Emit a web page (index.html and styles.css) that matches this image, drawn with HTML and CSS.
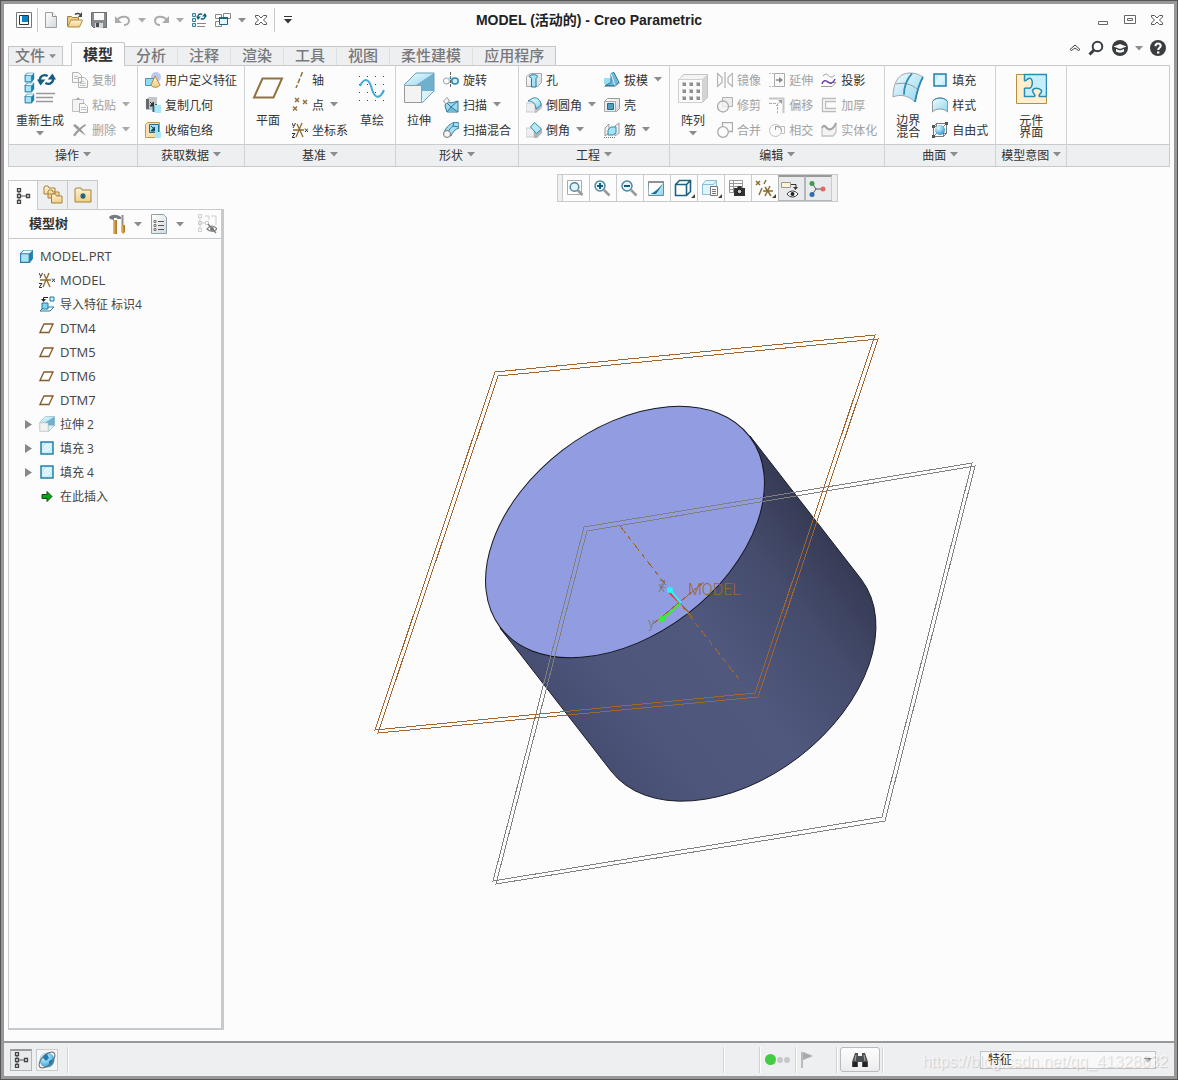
FILE: index.html
```html
<!DOCTYPE html>
<html lang="zh-CN">
<head>
  <meta charset="utf-8"/>
  <meta name="viewport" content="width=device-width, initial-scale=1">
  <title>MODEL (活动的) - Creo Parametric</title>
  <link rel="stylesheet" href="styles.css">
</head>
<body>

<!-- icon sprite -->
<svg class="sprite" aria-hidden="true">
	<defs>
		<linearGradient id="gBlue" x1="0" y1="0" x2="1" y2="1"><stop offset="0" stop-color="#f2fcff"/><stop offset="1" stop-color="#8fd6f0"/></linearGradient>
		<linearGradient id="gGray" x1="0" y1="0" x2="1" y2="1"><stop offset="0" stop-color="#fff"/><stop offset="1" stop-color="#d3d8db"/></linearGradient>
		<linearGradient id="gGold" x1="0" y1="0" x2="0" y2="1"><stop offset="0" stop-color="#fff3d6"/><stop offset="1" stop-color="#f1cd84"/></linearGradient>
		<linearGradient id="gWood" x1="0" y1="0" x2="1" y2="0"><stop offset="0" stop-color="#f0c070"/><stop offset="1" stop-color="#a8701f"/></linearGradient>
		<radialGradient id="gBall" cx=".35" cy=".3" r=".8"><stop offset="0" stop-color="#e4f7fe"/><stop offset=".5" stop-color="#7cc9ea"/><stop offset="1" stop-color="#2a88bb"/></radialGradient>

		<symbol id="caret" viewBox="0 0 8 5"><path d="M0 0h8L4 4.5z" fill="currentColor"/></symbol>
		<symbol id="app" viewBox="0 0 16 16"><path d="M.5.5h15v15H.5z" fill="#fff" stroke="#777"/><path d="M3.5 3.5h9v9h-9z" fill="#fff" stroke="#333"/><path d="M6 4h6v6H6z" fill="#0a84c8"/></symbol>
		<symbol id="new" viewBox="0 0 16 16"><path d="M2.500.5h7l4 4v11h-11z" fill="url(#gGray)" stroke="#9aa0a4"/><path d="M9.500.5v4h4" fill="#fff" stroke="#8b9195"/></symbol>
		<symbol id="open" viewBox="0 0 16 16"><path d="M.500 14V4.500h4l1 1h6V8" fill="#f1cd84" stroke="#a57c34"/><path d="M.8 15l3-7h11.700l-3 7z" fill="url(#gGold)" stroke="#b18b45"/><path d="M8 2.500c2-2 4-1 5.500 0" fill="none" stroke="#444" stroke-width="1.500"/><path d="M15 0v5h-4z" fill="#444"/></symbol>
		<symbol id="save" viewBox="0 0 16 16"><path d="M.5.500h15v15h-13l-2-2z" fill="#888b8e" stroke="#6c6f72"/><path d="M3 1h10v7H3z" fill="#fafafa"/><path d="M4 11h8v5H4z" fill="#d6d9db"/><path d="M5 11h3v4H5z" fill="#4a4d50"/></symbol>
		<symbol id="undo" viewBox="0 0 16 16"><path d="M2 8c4-5 12-4 12 1 0 3-3 4-5 4" fill="none" stroke="#a9abad" stroke-width="2"/><path d="M0 4v7h7z" fill="#a9abad"/></symbol>
		<symbol id="redo" viewBox="0 0 16 16"><path d="M14 8C10 3 2 4 2 9c0 3 3 4 5 4" fill="none" stroke="#a9abad" stroke-width="2"/><path d="M16 4v7H9z" fill="#a9abad"/></symbol>
		<symbol id="arrows" viewBox="0 0 16 12"><path d="M3 9C1 4 5 1 9 3M13 3c2 5-2 8-6 6" fill="none" stroke="#155e82" stroke-width="2"/><path d="M0 6h7L3 11zM16 6H9l4-5z" fill="#155e82"/></symbol>
		<symbol id="regen" viewBox="0 0 16 16"><path d="M1.500 1.500h3v3h-3zM1.500 6.500h3v3h-3zM1.500 11.500h3v3h-3z" fill="#bdeaf8" stroke="#3c7e9b"/><path d="M6 11.500h9M6 14.500h8" stroke="#888"/><use href="#arrows" x="5" y="0" width="11" height="9"/></symbol>
		<symbol id="windows" viewBox="0 0 16 16"><path d="M.5 2.500h6v4h-6zM8.500 1.500h7v5h-7zM.500 9.500h6v5h-6z" fill="#fff" stroke="#888"/><path d="M4.500 5.500h8v7h-8z" fill="#e3f7fd" stroke="#1c6688"/><path d="M4 5h9v2H4z" fill="#1c6688"/></symbol>
		<symbol id="close" viewBox="0 0 12 12"><path d="M.5 1.500h3L6 4l2.500-2.500h3V3L8.500 6l3 3v1.500h-3L6 8l-2.500 2.500h-3V9l3-3-3-3z" fill="#fff" stroke="#555"/></symbol>
		<symbol id="min" viewBox="0 0 12 12"><path d="M1.500 7.500h9v3h-9z" fill="#fff" stroke="#666"/></symbol>
		<symbol id="max" viewBox="0 0 12 12"><path d="M.5 1.500h11v8H.500zM3.500 4.500h5v2h-5z" fill="#fff" stroke="#666"/></symbol>
		<symbol id="up" viewBox="0 0 12 12"><path d="M1 7.500L6 3l5 4.500-1.500 1L6 6l-3.500 2.500z" fill="#fff" stroke="#444"/></symbol>
		<symbol id="search" viewBox="0 0 16 16"><circle cx="9.500" cy="6.500" r="4.800" fill="#fff" stroke="#3a3d40" stroke-width="2"/><path d="M1.500 14.500l4.500-4.500" stroke="#3a3d40" stroke-width="3"/></symbol>
		<symbol id="learn" viewBox="0 0 16 16"><circle cx="8" cy="8" r="8" fill="#3a3d40"/><path d="M1.500 6.500L8 4l6.500 2.500L8 9zM4 9v2.500c2 1.500 6 1.500 8 0V9l-4 1.500z" fill="#fff"/></symbol>
		<symbol id="help" viewBox="0 0 16 16"><circle cx="8" cy="8" r="8" fill="#3a3d40"/><path d="M5.500 6.200c0-3.600 5.200-3.400 5.200-.4C10.700 7.800 8.200 7.800 8.200 10" fill="none" stroke="#fff" stroke-width="2"/><path d="M7 11.500h2.400v2H7z" fill="#fff"/></symbol>

		<symbol id="cube" viewBox="0 0 14 14"><path d="M1 4l3-3h9v8l-3 4H1z" fill="#1f81a8"/><path d="M1.500 4.500h8v8h-8z" fill="#a6e4f8" stroke="#2d7c9f"/><path d="M2 4l2.500-2.500h8L10 4z" fill="#e4f8fe"/></symbol>
		<symbol id="regenBig" viewBox="0 0 32 32"><use href="#cube" x="0" y="0" width="11" height="11"/><use href="#cube" x="0" y="10" width="11" height="11"/><use href="#cube" x="0" y="21" width="11" height="11"/><use href="#arrows" x="13" y="0" width="19" height="15"/><path d="M12 21.500h19M12 25.500h17M12 29.500h17" stroke="#999" stroke-width="1.500"/></symbol>
		<symbol id="copy" viewBox="0 0 16 16"><path d="M.500.500h6l3 3v7h-9zM6.500 5.500h6l3 3v7h-9z" fill="#f6f6f6" stroke="#b3b3b3"/><path d="M2 4.500h4M2 6.500h4M8 9.500h4M8 11.500h5.500M8 13.500h5.500" stroke="#c3c3c3"/></symbol>
		<symbol id="paste" viewBox="0 0 16 16"><path d="M.500 2.500h11v12H.500z" fill="#f4f4f4" stroke="#c0c0c0"/><path d="M4 3V1.500h1L6 0l1 1.500h1V3z" fill="#aaa"/><path d="M7.500 6.500h5l3 3v6h-8z" fill="#fafafa" stroke="#b0b0b0"/><path d="M9 10.500h5M9 12.500h5" stroke="#c3c3c3"/></symbol>
		<symbol id="del" viewBox="0 0 16 16"><path d="M1 3.500l2-1.500c3 2 8 7 11 12-4-3-9-6-13-10.500zM13 2l1 1.500C10 6 5 11 3 14.500L1 13C4 9 8 5 13 2z" fill="#9b9b9b"/></symbol>
		<symbol id="udf" viewBox="0 0 16 16"><circle cx="11" cy="5" r="5" fill="#bfc8f0"/><path d="M.500 6.500h9v7h-9z" fill="#8edcf5" stroke="#4798b7"/><path d="M10 4l5 9c-1 3-8 3-9 0z" fill="url(#gGold)" stroke="#b9893b"/></symbol>
		<symbol id="copygeo" viewBox="0 0 16 16"><path d="M1 2l3-2h8v9H8v4H1z" fill="#c4c7c9"/><path d="M1 2h3v10H1z" fill="#626a70"/><path d="M5 5l3 3M8.500 5v4H5z" stroke="#333" fill="#333"/><path d="M8.500 9V15M11 7v7" stroke="#126d93" stroke-width="2"/><path d="M10 8h6v8h-6z" fill="#a9e8fb"/></symbol>
		<symbol id="shrink" viewBox="0 0 16 16"><path d="M.500 2.500l2-2h12v10l-4 5H.500z" fill="#f8dfae" stroke="#c39a4b"/><path d="M4.500 2.500h9v8h-9z" fill="#9ddff5" stroke="#21708f"/><path d="M6 4l3 3M9.500 5v4H6z" stroke="#17495e" fill="#17495e"/><path d="M10 10h6v6h-6z" fill="#a9e8fb"/></symbol>
		<symbol id="plane" viewBox="0 0 32 32"><path d="M10.500 6.500h19.500l-8.500 19H2z" fill="none" stroke="#8f7440" stroke-width="2"/></symbol>
		<symbol id="planeS" viewBox="0 0 16 16"><path d="M5 4h9l-4 8.500H1z" fill="#fff" stroke="#7d5c27" stroke-width="1.300"/></symbol>
		<symbol id="axis" viewBox="0 0 16 16"><path d="M10.500 0L4 16" stroke="#8f7440" stroke-width="1.500" stroke-dasharray="5 2"/></symbol>
		<symbol id="points" viewBox="0 0 16 16"><path d="M3 1l4 4m0-4l-4 4M11 3l4 4m0-4l-4 4M1 9.500l4 4m0-4l-4 4" stroke="#8f7440" stroke-width="1.500"/></symbol>
		<symbol id="csys" viewBox="0 0 16 16"><path d="M1 8h11M5 2l6 13M10 1L4 15" stroke="#8f6a2d" stroke-width="1.300"/><path d="M0 1l1.500 3M3.500 1L1 6M0 11.500h3l-3 4h3M13 6.500l3 3.500m0-3.500L13 10" stroke="#333" fill="none"/></symbol>
		<symbol id="sketch" viewBox="0 0 32 32"><path d="M3 4.500h26M3 12.500h26M3 20.500h26M3 28.500h26" stroke="#444" stroke-dasharray="1 7"/><path d="M4 14C8 6 12 6 15 14c3 12 8 15 13 4" fill="none" stroke="#43a9d8" stroke-width="2"/></symbol>
		<symbol id="extrude" viewBox="0 0 32 32"><path d="M1 13L13 1h18L18 13z" fill="url(#gBlue)"/><path d="M18 13L31 1v18L18 31z" fill="#d6f2fb"/><path d="M13 13L31 1v18H18z" fill="#6fb1cd"/><path d="M1.500 13.500h17v17h-17z" fill="#f3f3f3" stroke="#999"/><path d="M1 13L13 1h18v18L19 31" fill="none" stroke="#6a9fb5"/></symbol>
		<symbol id="revolve" viewBox="0 0 16 16"><ellipse cx="3.500" cy="9" rx="3" ry="3" fill="#fff" stroke="#999"/><path d="M3 6c3-1 6-1 9 0v5H8z" fill="#9cdcf2"/><ellipse cx="12" cy="9" rx="3.200" ry="3" fill="#cdeffc" stroke="#2f89ae" stroke-width="1.500"/><path d="M7.500 0v16" stroke="#666" stroke-dasharray="3 1"/></symbol>
		<symbol id="sweep" viewBox="0 0 16 16"><path d="M3 4l5 2 7-2v11H4L2 9z" fill="#9cd9ef" stroke="#2e7c9d"/><path d="M4 15l4-5 7 5M8 10l7-6M8 10L3 5" stroke="#2e7c9d" fill="#6fb9d6"/><path d="M.500 4L4 .500 6.500 4 3 7z" fill="#f5f5f5" stroke="#999"/></symbol>
		<symbol id="blend" viewBox="0 0 16 16"><path d="M1 11C3 4 8 2 11 0l5 1v5C12 7 9 11 8 14z" fill="#a7def2" stroke="#2e7c9d"/><path d="M11 0l-1 4 6 1M10 4c-3 2-4 4-5 6" fill="none" stroke="#2e7c9d"/><circle cx="4" cy="12" r="3.500" fill="#f5f5f5" stroke="#777"/></symbol>
		<symbol id="hole" viewBox="0 0 16 16"><path d="M.500 4.500l4-3h11v9l-4 4H.500z" fill="url(#gGray)" stroke="#a4a8aa"/><path d="M3 4.500C5 2 10 2 12 4.500c-1 1-2 1-2 2V15H5.500V6.500C5.500 5 3 5.500 3 4.500z" fill="#a5e3f7" stroke="#20789d"/></symbol>
		<symbol id="round" viewBox="0 0 16 16"><path d="M0 6h9v9H0z" fill="#eceeef" stroke="#ccc"/><path d="M9 9l7-3v5l-6 5H9z" fill="#bbbec0"/><path d="M2 4l5-3c5-1 8 3 8 7l-5 4c0-5-3-8-8-8z" fill="url(#gBlue)" stroke="#2f89ae"/></symbol>
		<symbol id="chamfer" viewBox="0 0 16 16"><path d="M0 6h8v9H0z" fill="#eceeef" stroke="#ccc"/><path d="M10 11l6-4v4l-5 5H8V9z" fill="#b0b4b6"/><path d="M4.500 5l4-4.500L15.500 7l-5 4.500z" fill="#b5e9f9" stroke="#2f89ae"/></symbol>
		<symbol id="draft" viewBox="0 0 16 16"><path d="M0 6h8v6H0z" fill="#9adcf3"/><path d="M7 1.500l3-1 5 10-4 3H1l6-3z" fill="#71b9d6" stroke="#2a7ea2"/><path d="M7 1.500l4 12" stroke="#d9f5fd"/><path d="M0 14.500h11l5-4" fill="none" stroke="#aaa"/></symbol>
		<symbol id="shell" viewBox="0 0 16 16"><path d="M.500 4.500l3-3h12v10l-3 3H.500z" fill="url(#gGray)" stroke="#999"/><path d="M.500 4.500h11v10H.500z" fill="#ececec" stroke="#aaa"/><path d="M3.500 6.500h6v6h-6z" fill="#4e9fc2" stroke="#266d8b"/></symbol>
		<symbol id="rib" viewBox="0 0 16 16"><path d="M1 6l4-4v9l-4 3z" fill="#f2f2f2" stroke="#999"/><path d="M11 4l4-3v10l-4 3z" fill="#f2f2f2" stroke="#999"/><path d="M4 8l3-3h5v6l-3 2H4z" fill="#a5e3f7" stroke="#2f89ae"/><path d="M0 15.500h12" stroke="#777" stroke-dasharray="1 1"/></symbol>
		<symbol id="pattern" viewBox="0 0 32 32"><path d="M1.500 7.500l5-5h24v23l-5 5h-24z" fill="#d2d4d5" stroke="#c2c4c5"/><path d="M1.500 7.500h24v23h-24z" fill="#fafafa" stroke="#d0d0d0"/><path d="M2 7l5-4h23l-5 4z" fill="#f4f4f4"/><path d="M5 10h4v4H5zM12 10h4v4h-4zM19 10h4v4h-4zM5 17h4v4H5zM12 17h4v4h-4zM19 17h4v4h-4zM5 24h4v4H5zM12 24h4v4h-4zM19 24h4v4h-4z" fill="#c4c6c8"/><path d="M6 11h3v3H6zM13 11h3v3h-3zM20 11h3v3h-3zM6 18h3v3H6zM13 18h3v3h-3zM20 18h3v3h-3zM6 25h3v3H6zM13 25h3v3h-3zM20 25h3v3h-3z" fill="#8c8e90"/></symbol>
		<symbol id="mirror" viewBox="0 0 16 16"><path d="M.500 1.500l4.500 4v5l-4.500 4zM15.500 1.500l-4.500 4v5l4.500 4zM8 0v16" stroke="#b5b5b5" fill="none" stroke-width="1.300"/></symbol>
		<symbol id="trim" viewBox="0 0 16 16"><path d="M5.500.500h10v9h-10z" fill="#ededed" stroke="#b0b0b0"/><circle cx="6" cy="9.500" r="5.500" fill="#f3f3f3" fill-opacity=".8" stroke="#ababab" stroke-width="1.300"/></symbol>
		<symbol id="merge" viewBox="0 0 16 16"><path d="M5.500 5V.500h10v9h-4" fill="none" stroke="#aaa" stroke-width="1.300"/><circle cx="6" cy="10" r="5.300" fill="none" stroke="#aaa" stroke-width="1.300"/></symbol>
		<symbol id="extend" viewBox="0 0 16 16"><path d="M0 1.500h5M0 14.500h5" stroke="#bbb" stroke-dasharray="2 1"/><path d="M5.500 1.500h10v13h-10z" fill="#fafafa" stroke="#aaa"/><path d="M7 8h4" stroke="#888" stroke-width="1.500"/><path d="M10 5l4 3-4 3z" fill="#888"/></symbol>
		<symbol id="offset" viewBox="0 0 16 16"><path d="M0 1.500h14.500V16" stroke="#c5c5c5" stroke-width="2" fill="none"/><path d="M0 6.500h8.500V16M7 9l5-5" stroke="#aaa" stroke-dasharray="3 1" fill="none"/><path d="M13 3v4L9 3z" fill="#999"/></symbol>
		<symbol id="intersect" viewBox="0 0 16 16"><path d="M6 4.500h9.500v7H12" fill="none" stroke="#c0c0c0"/><circle cx="6.500" cy="8.500" r="6" fill="none" stroke="#c0c0c0"/><path d="M6.500 8V4.500c4 0 6 2 6 5" fill="none" stroke="#999"/></symbol>
		<symbol id="project" viewBox="0 0 16 16"><path d="M2 4c3-3 4-2 6 0s4 1 6-1M0 14.500h11l4-4H6" stroke="#999" fill="none"/><path d="M1 12c1-4 4-4 6-2s5 2 7-3" stroke="#6b3fa5" stroke-width="1.500" fill="none"/></symbol>
		<symbol id="thicken" viewBox="0 0 16 16"><path d="M15 1.500H1.500v13H15M15 4.500H4.500v7H15" stroke="#bbb" fill="none" stroke-width="1.300"/></symbol>
		<symbol id="solidify" viewBox="0 0 16 16"><path d="M1 14V6c2-5 4 0 6 1s6 0 8-6v9l-3 4z" fill="#f3f3f3" stroke="#c4c4c4" stroke-width="1.300"/><path d="M1 6c2-5 4 0 6 1s6 0 8-6" stroke="#a5a5a5" stroke-width="2" fill="none"/></symbol>
		<symbol id="boundary" viewBox="0 0 32 32"><path d="M1 25C1 12 6 4 12 2c7-2 13-1 19 3-4 7-6 14-8 25C16 23 8 22 1 25z" fill="url(#gBlue)" stroke="#a3a6a8"/><path d="M4 12c8-2 16 0 22 6" stroke="#999" fill="none"/><path d="M20 1.500C15 7 12 14 12 22.500M31 5c-4 7-6 14-8 25" stroke="#2f89b0" stroke-width="1.800" fill="none"/></symbol>
		<symbol id="fill" viewBox="0 0 16 16"><path d="M2 2h12v12H2z" fill="#c9effc" stroke="#277fa5" stroke-width="1.500"/><path d="M4 9l5-5M4 12l8-8M7 12l5-5" stroke="#fff"/></symbol>
		<symbol id="style" viewBox="0 0 16 16"><path d="M.500 4C4 0 12 0 15.500 4v11c-3-4-12-4-15 0z" fill="url(#gBlue)" stroke="#929799"/><path d="M1 4C4 0 12 0 15 4" fill="none" stroke="#2f89ae"/></symbol>
		<symbol id="freestyle" viewBox="0 0 16 16"><path d="M1.500 4.500h10v10h-10zM4.500 1.500h10v10h-10zM1.500 4.500l3-3M11.500 4.500l3-3M1.500 14.500l3-3M11.500 14.500l3-3" stroke="#777" fill="none"/><circle cx="8" cy="8" r="5" fill="url(#gBall)"/><path d="M0 3h3v3H0zM13 0h3v3h-3zM0 13h3v3H0z" fill="#555"/></symbol>
		<symbol id="component" viewBox="0 0 32 32"><path d="M1.500 2.500h30v29h-30z" fill="#ffefcf" stroke="#b98e3f"/><path d="M9.500 2.500h22v22h-7c-2-2 3-3 2-6-2-3-8-3-9 0 0 3 4 4 2 6H9.500v-8c2-2 5 2 7-2 2-5 0-9-3-8-2 1-2 3-4 2z" fill="#c6eefb" stroke="#2c8bb2" stroke-width="1.500"/></symbol>

		<symbol id="tree" viewBox="0 0 16 16"><path d="M4 4v8M5 8h6" stroke="#555"/><path d="M2.500.500h3v3h-3zM2.500 6.500h3v3h-3zM2.500 12.500h3v3h-3zM11.500 6.500h3v3h-3z" fill="#fff" stroke="#444" stroke-width="1.300"/></symbol>
		<symbol id="folders" viewBox="0 0 20 20"><path d="M1 9V2l1-1h3l1 2h6v6zM5 13V6l1-1h3l1 2h6v6z" fill="url(#gGold)" stroke="#a8813a"/><path d="M8.500 18V10l1-1h3l1 2h5.500v7z" fill="url(#gGold)" stroke="#a8813a"/></symbol>
		<symbol id="favs" viewBox="0 0 20 20"><path d="M2 17V4l1-1h5l1 2h9v12z" fill="url(#gGold)" stroke="#a8813a"/><path d="M10 8v6M7 11h6M8 9l4 4m0-4l-4 4" stroke="#14617f" stroke-width="1.200"/></symbol>
		<symbol id="tools" viewBox="0 0 20 20"><path d="M2 3c3-3 8-3 12 0v2H10V4H7v2L3 5z" fill="#777c82"/><path d="M6 6h4v14H6z" fill="url(#gWood)"/><path d="M15.500 1v11" stroke="#8b9095" stroke-width="2"/><path d="M14 11h4v7l-2 2-2-2z" fill="url(#gWood)"/></symbol>
		<symbol id="list" viewBox="0 0 20 20"><path d="M2.500.500h12l3 3v16h-15z" fill="url(#gGray)" stroke="#8ea1ad"/><path d="M9 7.500h6M9 11.500h6M9 15.500h6" stroke="#555"/><path d="M5 6.500h2v2H5zM5 10.500h2v2H5zM5 14.500h2v2H5z" fill="none" stroke="#777"/></symbol>
		<symbol id="hidetree" viewBox="0 0 20 20"><path d="M1.500.500h3v3h-3zM1.500 7.500h3v3h-3zM1.500 14.500h3v3h-3zM8.500 7.500h3v3h-3zM3 4v10M5 9h3M8 2h4v4M14 2h5v9" fill="none" stroke="#ccc"/><path d="M10 15c3-4 7-4 10 0-3 3-7 3-10 0zM11 10l8 9" fill="none" stroke="#777" stroke-width="1.200"/><circle cx="15" cy="15" r="2" fill="#777"/></symbol>
		<symbol id="import" viewBox="0 0 16 16"><path d="M1 15l4-4h10l-4 4z" fill="#fff" stroke="#22789a"/><path d="M3 7h6v6H3z" fill="#7fd4f0" stroke="#22789a"/><path d="M11 1h4v4h-4z" fill="#c9f1fd" stroke="#22789a"/><path d="M9 1.500H4.500V5" fill="none" stroke="#222"/><path d="M2 3h5L4.500 6z" fill="#222"/></symbol>
		<symbol id="insert" viewBox="0 0 16 16"><path d="M3 6.500h5v-3L13 8.500l-5 5v-3H3z" fill="#0aa31c" stroke="#114d12"/></symbol>
		<symbol id="expand" viewBox="0 0 10 10"><path d="M1 1l7 4.500L1 10z" fill="#888"/></symbol>

		<symbol id="zoomfit" viewBox="0 0 18 18"><path d="M1.500 1.500h14v14h-14z" fill="#fff" stroke="#aaa"/><circle cx="8.500" cy="8" r="4.300" fill="#dff4fc" stroke="#4f87a0" stroke-width="1.500"/><path d="M11.500 11l5 5" stroke="#999" stroke-width="2.500"/></symbol>
		<symbol id="zoomin" viewBox="0 0 18 18"><circle cx="7" cy="7" r="5" fill="#e5f6fd" stroke="#4f87a0" stroke-width="1.500"/><path d="M4 7h6M7 4v6" stroke="#145c7d" stroke-width="2"/><path d="M11 11l5.500 5.500" stroke="#999" stroke-width="2.500"/></symbol>
		<symbol id="zoomout" viewBox="0 0 18 18"><circle cx="7" cy="7" r="5" fill="#e5f6fd" stroke="#4f87a0" stroke-width="1.500"/><path d="M4 7h6" stroke="#145c7d" stroke-width="2"/><path d="M11 11l5.500 5.500" stroke="#999" stroke-width="2.500"/></symbol>
		<symbol id="repaint" viewBox="0 0 18 18"><path d="M1.500 2.500h15v14h-15z" fill="url(#gBlue)" stroke="#708b98"/><path d="M1 2h16v2H1z" fill="#8e9295"/><path d="M1.500 16l9-6 5-6H2z" fill="#fff"/><path d="M4 15h5l7-10c-4 4-7 7-12 10z" fill="#1e6c8e"/></symbol>
		<symbol id="shade" viewBox="0 0 18 18"><path d="M1.500 5.500l4-4h11v11l-4 4h-11zM1.500 5.500h11v11M12.500 5.500l4-4" fill="#fff" stroke="#1d6381" stroke-width="1.600"/></symbol>
		<symbol id="saved" viewBox="0 0 18 18"><path d="M1.500 5.500l3-4h11v11l-3 3h-11zM1.500 5.500h11M12.500 5.500l3-4" fill="#ddf5fd" stroke="#8dbdd0"/><path d="M9.500 7.500h7v9h-7z" fill="#fafafa" stroke="#777"/><path d="M11 10.500h4M11 12.500h4M11 14.500h4" stroke="#777"/></symbol>
		<symbol id="viewmgr" viewBox="0 0 18 18"><path d="M1.500 1.500h13v12h-13zM1.500 4.500h13M1.500 7.500h13M1.500 10.500h13M5.500 1.500v12" fill="#fff" stroke="#999"/><path d="M6 9h3l1-2h3l1 2h3v8H6z" fill="#333"/><circle cx="11.500" cy="12.500" r="2.300" fill="#ccc" stroke="#111"/></symbol>
		<symbol id="datum" viewBox="0 0 18 18"><path d="M1 2l4 4m0-4L1 6M11 1L9 5M7 9L4 16M8 12h10M10 8l6 9M15 7l-5 10" stroke="#8b6a2c" stroke-width="1.400"/></symbol>
		<symbol id="annot" viewBox="0 0 18 18"><path d="M.500 2.500h9v5h-9z" fill="#fff4cf" stroke="#999"/><path d="M10 4.500h5V8" fill="none" stroke="#333"/><path d="M12 7h5l-2.500 3z" fill="#333"/><path d="M6 14c3-4 8-4 11 0-3 4-8 4-11 0z" fill="#fff" stroke="#333"/><circle cx="11.500" cy="14" r="2" fill="#222"/></symbol>
		<symbol id="spin" viewBox="0 0 18 18"><path d="M8 9L4 3M8 9h6M8 9l-4 6" stroke="#555"/><circle cx="4" cy="3.500" r="2.500" fill="#3c9c4c"/><circle cx="15" cy="9" r="2.500" fill="#e06a63"/><circle cx="4" cy="14.500" r="2.500" fill="#2f6fae"/></symbol>
		<symbol id="globe" viewBox="0 0 18 18"><circle cx="9" cy="9" r="7.500" fill="url(#gBall)"/><path d="M6 4l3-1 2 4-3 3-3-3zM11 10l4-2-1 5-3 1z" fill="#1e7eb3"/><ellipse cx="9" cy="9" rx="10" ry="5" transform="rotate(-45 9 9)" fill="none" stroke="#666"/></symbol>
		<symbol id="find" viewBox="0 0 18 16"><path d="M4 1h3v3h4V1h3l3 9v5h-6v-5H7v5H1v-5z" fill="#4c5054"/><path d="M2 10h4v5H2zM12 10h4v5h-4z" fill="#222"/><path d="M5 3L4 9M13 3l1 6" stroke="#aaa"/></symbol>
		<symbol id="flag" viewBox="0 0 14 18"><path d="M2 1v16" stroke="#bbb" stroke-width="2"/><path d="M3 1l10 4-10 4z" fill="#aaa"/></symbol>
	</defs>
</svg>

<div class="window">
	<header class="titlebar">
		<div class="quick">
			<button title="Creo"><svg class="i16"><use href="#app"/></svg></button>
			<span class="sep"></span>
			<button title="新建"><svg class="i16"><use href="#new"/></svg></button>
			<button title="打开"><svg class="i16"><use href="#open"/></svg></button>
			<button title="保存"><svg class="i16"><use href="#save"/></svg></button>
			<button title="撤消"><svg class="i16"><use href="#undo"/></svg></button>
			<button class="drop" title="撤消列表"><svg class="caret light"><use href="#caret"/></svg></button>
			<button title="重做"><svg class="i16"><use href="#redo"/></svg></button>
			<button class="drop" title="重做列表"><svg class="caret light"><use href="#caret"/></svg></button>
			<button title="重新生成"><svg class="i16"><use href="#regen"/></svg></button>
			<button title="窗口"><svg class="i16"><use href="#windows"/></svg></button>
			<button class="drop" title="窗口列表"><svg class="caret"><use href="#caret"/></svg></button>
			<button title="关闭"><svg class="i12"><use href="#close"/></svg></button>
			<span class="sep"></span>
			<button title="自定义"><svg class="caret custom"><use href="#caret"/></svg></button>
		</div>
		<h1>MODEL (活动的) - Creo Parametric</h1>
		<div class="winbuttons">
			<button title="最小化"><svg class="i12"><use href="#min"/></svg></button>
			<button title="最大化"><svg class="i12"><use href="#max"/></svg></button>
			<button title="关闭窗口"><svg class="i12"><use href="#close"/></svg></button>
		</div>
	</header>

	<nav class="tabbar">
		<button class="tab file">文件<svg class="caret"><use href="#caret"/></svg></button>
		<button class="tab active">模型</button>
		<button class="tab">分析</button>
		<button class="tab">注释</button>
		<button class="tab">渲染</button>
		<button class="tab">工具</button>
		<button class="tab">视图</button>
		<button class="tab">柔性建模</button>
		<button class="tab">应用程序</button>
		<div class="helpers">
			<button class="slim" title="最小化功能区"><svg class="i12"><use href="#up"/></svg></button>
			<button title="搜索"><svg class="i16"><use href="#search"/></svg></button>
			<button title="学习"><svg class="i16"><use href="#learn"/></svg></button>
			<button class="drop" title="更多"><svg class="caret"><use href="#caret"/></svg></button>
			<button title="帮助"><svg class="i16"><use href="#help"/></svg></button>
		</div>
	</nav>

	<section class="ribbon">
		<div class="group">
			<div class="body">
				<button class="big"><svg class="i32"><use href="#regenBig"/></svg><span>重新生成</span><svg class="caret"><use href="#caret"/></svg></button>
				<div class="col">
					<button class="small" disabled><svg class="i16"><use href="#copy"/></svg>复制</button>
					<button class="small" disabled><svg class="i16"><use href="#paste"/></svg>粘贴<svg class="caret light"><use href="#caret"/></svg></button>
					<button class="small" disabled><svg class="i16"><use href="#del"/></svg>删除<svg class="caret light"><use href="#caret"/></svg></button>
				</div>
			</div>
			<button class="name">操作<svg class="caret"><use href="#caret"/></svg></button>
		</div>

		<div class="group">
			<div class="body">
				<div class="col">
					<button class="small"><svg class="i16"><use href="#udf"/></svg>用户定义特征</button>
					<button class="small"><svg class="i16"><use href="#copygeo"/></svg>复制几何</button>
					<button class="small"><svg class="i16"><use href="#shrink"/></svg>收缩包络</button>
				</div>
			</div>
			<button class="name">获取数据<svg class="caret"><use href="#caret"/></svg></button>
		</div>

		<div class="group">
			<div class="body">
				<button class="big"><svg class="i32"><use href="#plane"/></svg><span>平面</span></button>
				<div class="col">
					<button class="small"><svg class="i16"><use href="#axis"/></svg>轴</button>
					<button class="small"><svg class="i16"><use href="#points"/></svg>点<svg class="caret"><use href="#caret"/></svg></button>
					<button class="small"><svg class="i16"><use href="#csys"/></svg>坐标系</button>
				</div>
				<button class="big"><svg class="i32"><use href="#sketch"/></svg><span>草绘</span></button>
			</div>
			<button class="name">基准<svg class="caret"><use href="#caret"/></svg></button>
		</div>

		<div class="group">
			<div class="body">
				<button class="big"><svg class="i32"><use href="#extrude"/></svg><span>拉伸</span></button>
				<div class="col">
					<button class="small"><svg class="i16"><use href="#revolve"/></svg>旋转</button>
					<button class="small"><svg class="i16"><use href="#sweep"/></svg>扫描<svg class="caret"><use href="#caret"/></svg></button>
					<button class="small"><svg class="i16"><use href="#blend"/></svg>扫描混合</button>
				</div>
			</div>
			<button class="name">形状<svg class="caret"><use href="#caret"/></svg></button>
		</div>

		<div class="group">
			<div class="body">
				<div class="col">
					<button class="small"><svg class="i16"><use href="#hole"/></svg>孔</button>
					<button class="small"><svg class="i16"><use href="#round"/></svg>倒圆角<svg class="caret"><use href="#caret"/></svg></button>
					<button class="small"><svg class="i16"><use href="#chamfer"/></svg>倒角<svg class="caret"><use href="#caret"/></svg></button>
				</div>
				<div class="col">
					<button class="small"><svg class="i16"><use href="#draft"/></svg>拔模<svg class="caret"><use href="#caret"/></svg></button>
					<button class="small"><svg class="i16"><use href="#shell"/></svg>壳</button>
					<button class="small"><svg class="i16"><use href="#rib"/></svg>筋<svg class="caret"><use href="#caret"/></svg></button>
				</div>
			</div>
			<button class="name">工程<svg class="caret"><use href="#caret"/></svg></button>
		</div>

		<div class="group">
			<div class="body">
				<button class="big"><svg class="i32"><use href="#pattern"/></svg><span>阵列</span><svg class="caret"><use href="#caret"/></svg></button>
				<div class="col">
					<button class="small" disabled><svg class="i16"><use href="#mirror"/></svg>镜像</button>
					<button class="small" disabled><svg class="i16"><use href="#trim"/></svg>修剪</button>
					<button class="small" disabled><svg class="i16"><use href="#merge"/></svg>合并</button>
				</div>
				<div class="col">
					<button class="small" disabled><svg class="i16"><use href="#extend"/></svg>延伸</button>
					<button class="small" disabled><svg class="i16"><use href="#offset"/></svg>偏移</button>
					<button class="small" disabled><svg class="i16"><use href="#intersect"/></svg>相交</button>
				</div>
				<div class="col">
					<button class="small"><svg class="i16"><use href="#project"/></svg>投影</button>
					<button class="small" disabled><svg class="i16"><use href="#thicken"/></svg>加厚</button>
					<button class="small" disabled><svg class="i16"><use href="#solidify"/></svg>实体化</button>
				</div>
			</div>
			<button class="name">编辑<svg class="caret"><use href="#caret"/></svg></button>
		</div>

		<div class="group">
			<div class="body">
				<button class="big"><svg class="i32"><use href="#boundary"/></svg><span>边界<br>混合</span></button>
				<div class="col">
					<button class="small"><svg class="i16"><use href="#fill"/></svg>填充</button>
					<button class="small"><svg class="i16"><use href="#style"/></svg>样式</button>
					<button class="small"><svg class="i16"><use href="#freestyle"/></svg>自由式</button>
				</div>
			</div>
			<button class="name">曲面<svg class="caret"><use href="#caret"/></svg></button>
		</div>

		<div class="group">
			<div class="body">
				<button class="big"><svg class="i32"><use href="#component"/></svg><span>元件<br>界面</span></button>
			</div>
			<button class="name">模型意图<svg class="caret"><use href="#caret"/></svg></button>
		</div>

		<div class="group rest">
			<div class="body"></div>
			<div class="name"></div>
		</div>
	</section>

	<main class="work">
		<aside class="side">
			<div class="sidetabs">
				<button class="active" title="模型树"><svg class="i16"><use href="#tree"/></svg></button>
				<button title="文件夹浏览器"><svg class="i20"><use href="#folders"/></svg></button>
				<button title="收藏夹"><svg class="i20"><use href="#favs"/></svg></button>
			</div>
			<div class="panel">
				<div class="panelhead">
					<h2>模型树</h2>
					<button title="设置"><svg class="i20"><use href="#tools"/></svg></button>
					<button class="drop" title="设置菜单"><svg class="caret"><use href="#caret"/></svg></button>
					<button title="显示"><svg class="i20"><use href="#list"/></svg></button>
					<button class="drop" title="显示菜单"><svg class="caret"><use href="#caret"/></svg></button>
					<button class="last" title="隐藏"><svg class="i20"><use href="#hidetree"/></svg></button>
				</div>
				<ul class="tree">
					<li class="root latin"><svg class="i16"><use href="#cube" x="0" y="1" width="15" height="15"/></svg>MODEL.PRT</li>
					<li class="latin"><span class="arrow"></span><svg class="i16"><use href="#csys"/></svg>MODEL</li>
					<li><span class="arrow"></span><svg class="i16"><use href="#import"/></svg>导入特征 标识4</li>
					<li class="latin"><span class="arrow"></span><svg class="i16"><use href="#planeS"/></svg>DTM4</li>
					<li class="latin"><span class="arrow"></span><svg class="i16"><use href="#planeS"/></svg>DTM5</li>
					<li class="latin"><span class="arrow"></span><svg class="i16"><use href="#planeS"/></svg>DTM6</li>
					<li class="latin"><span class="arrow"></span><svg class="i16"><use href="#planeS"/></svg>DTM7</li>
					<li><svg class="arrow"><use href="#expand"/></svg><svg class="i16"><use href="#extrude"/></svg>拉伸 2</li>
					<li><svg class="arrow"><use href="#expand"/></svg><svg class="i16"><use href="#fill"/></svg>填充 3</li>
					<li><svg class="arrow"><use href="#expand"/></svg><svg class="i16"><use href="#fill"/></svg>填充 4</li>
					<li><span class="arrow"></span><svg class="i16"><use href="#insert"/></svg>在此插入</li>
				</ul>
			</div>
		</aside>

		<section class="stage">
			<div class="viewbar">
				<button title="重新调整"><svg class="i18"><use href="#zoomfit"/></svg></button>
				<button title="放大"><svg class="i18"><use href="#zoomin"/></svg></button>
				<button title="缩小"><svg class="i18"><use href="#zoomout"/></svg></button>
				<button title="重画"><svg class="i18"><use href="#repaint"/></svg></button>
				<button class="more" title="显示样式"><svg class="i18"><use href="#shade"/></svg></button>
				<button class="more" title="已保存方向"><svg class="i18"><use href="#saved"/></svg></button>
				<button title="视图管理器"><svg class="i18"><use href="#viewmgr"/></svg></button>
				<button class="more" title="基准显示过滤器"><svg class="i18"><use href="#datum"/></svg></button>
				<button class="on" title="注释显示"><svg class="i18"><use href="#annot"/></svg></button>
				<button class="on" title="旋转中心"><svg class="i18"><use href="#spin"/></svg></button>
			</div>

			<svg class="scene" viewBox="224 202 946 839">
				<defs>
					<linearGradient id="gBody" gradientUnits="userSpaceOnUse" x1="500" y1="628" x2="750" y2="436">
						<stop offset="0" stop-color="#474e72"/>
						<stop offset=".2" stop-color="#4e567c"/>
						<stop offset=".5" stop-color="#50587e"/>
						<stop offset=".8" stop-color="#444b6b"/>
						<stop offset="1" stop-color="#363b55"/>
					</linearGradient>
				</defs>
				<!-- cylinder -->
				<path d="M750 436L861 579A157 103 -37.500 0 1 611 771L500 628z" fill="url(#gBody)" stroke="#1b1d2a"/>
				<ellipse cx="625" cy="532" rx="157" ry="103" transform="rotate(-37.500 625 532)" fill="#919de0" stroke="#15161f"/>
				<!-- datum planes -->
				<g fill="none" stroke="#808080" shape-rendering="crispEdges">
					<path d="M584 527L972 463 882 817 493 881z"/>
					<path d="M587 531L975 466 885 821 496 884z"/>
				</g>
				<g fill="none" stroke="#a0662f" shape-rendering="crispEdges">
					<path d="M495 372L875 335 755 693 375 730z"/>
					<path d="M498 376L878 339 758 697 378 733z"/>
					<path d="M620 526L742 683" stroke-dasharray="9 4 5 4"/>
					<path d="M653 624L704 582M680 603L693 617"/>
				</g>
				<!-- coordinate system -->
				<path d="M669 592L678 601" stroke="#f03030" stroke-width="2"/>
				<path d="M670 590L681 603" stroke="#2ef0ff" stroke-width="2"/>
				<path d="M662 619L680 604" stroke="#33f033" stroke-width="2"/>
				<circle cx="670" cy="590" r="3" fill="#2ef0ff"/>
				<circle cx="662" cy="619" r="3" fill="#33f033"/>
				<text x="648" y="628" class="axisname">y</text>
				<text x="658" y="592" class="axisname">x</text>
				<text x="659" y="588" class="axisname">z</text>
				<text x="688" y="595" class="csysname">MODEL</text>
			</svg>
		</section>
	</main>

	<footer class="status">
		<button class="toggle on" title="模型树"><svg class="i16"><use href="#tree"/></svg></button>
		<button class="toggle" title="浏览器"><svg class="i18"><use href="#globe"/></svg></button>
		<div class="cell first"></div>
		<div class="cells">
			<div class="cell"></div>
			<div class="cell lights"><i class="go"></i><i></i><i></i></div>
			<div class="cell flag"><svg class="i18"><use href="#flag"/></svg></div>
			<div class="cell search"><button class="find" title="查找"><svg class="i18"><use href="#find"/></svg></button></div>
			<div class="cell"></div>
			<div class="filter">
				<select aria-label="选择过滤器"><option>特征</option><option>几何</option><option>基准</option></select>
				<svg class="caret"><use href="#caret"/></svg>
			</div>
		</div>
		<span class="mark">https://blog.csdn.net/qq_41328632</span>
	</footer>
</div>

</body>
</html>
```

FILE: styles.css
```css
	* {
		box-sizing: border-box;
	}

	body {
		margin: 0;
		background-color: #fcfcfc;
		color: #333;
		font-family: "Liberation Sans", "Noto Sans CJK SC", sans-serif;
		font-size: 12px;
	}

	button {
		display: flex;
		align-items: center;
		justify-content: center;
		margin: 0;
		padding: 0;
		border: 0;
		background: none;
		color: inherit;
		font: inherit;
		white-space: nowrap;
	}

	svg {
		display: block;
		flex: none;
	}

	.sprite {
		position: absolute;
		width: 0;
		height: 0;
	}

	.i12 { width: 12px; height: 12px; }
	.i16 { width: 16px; height: 16px; }
	.i18 { width: 18px; height: 18px; }
	.i20 { width: 20px; height: 20px; }
	.i32 { width: 32px; height: 32px; }

	.caret {
		width: 8px;
		height: 5px;
		color: #8a8c8f;
	}

	.caret.light {
		color: #aaa;
	}

	.caret.custom {
		height: 8px;
		padding-top: 2px;
		border-top: 1px solid #333;
		color: #333;
	}

	.window {
		display: flex;
		flex-direction: column;
		min-height: 100vh;
		padding: 3px;
		border: 1px solid #555;
		box-shadow: inset 0 0 0 3px #999799;
	}

	/* title bar */
	.titlebar {
		display: grid;
		grid-template-columns: 1fr auto 1fr;
		align-items: center;
		height: 32px;
	}

	.titlebar h1 {
		margin: 0;
		color: #222;
		font-size: 14px;
		font-weight: bold;
		line-height: 18px;
	}

	.quick {
		display: flex;
		align-items: center;
		padding-left: 8px;
	}

	.quick button,
	.helpers button {
		width: 24px;
		height: 24px;
	}

	.quick .drop,
	.helpers .drop {
		width: 14px;
	}

	.helpers .slim {
		width: 18px;
	}

	.sep {
		width: 1px;
		height: 24px;
		margin: 0 1px;
		background-color: #c8cacc;
	}

	.winbuttons {
		display: flex;
		justify-content: flex-end;
		padding-right: 4px;
	}

	.winbuttons button {
		width: 27px;
		height: 24px;
	}

	/* ribbon tabs */
	.tabbar {
		display: flex;
		align-items: flex-end;
		height: 29px;
		padding: 0 4px;
	}

	.tab {
		height: 20px;
		margin-bottom: -1px;
		padding: 0 11px;
		border-top: 1px solid #c3c7ca;
		border-bottom: 1px solid #c3c7ca;
		border-right: 1px solid #dcdfe1;
		background-color: #eeeff1;
		color: #77797c;
		font-size: 15px;
		font-weight: 500;
		line-height: 18px;
	}

	.tab:nth-child(9) {
		border-right-color: #c3c7ca;
	}

	.tab.file {
		gap: 4px;
		margin-right: 8px;
		padding: 0 6px;
		border: 1px solid #c3c7ca;
	}

	.tab.file .caret {
		width: 7px;
	}

	.tab.active {
		z-index: 1;
		height: 24px;
		border: 1px solid #c3c7ca;
		border-bottom: 0;
		border-radius: 2px 2px 0 0;
		background-color: #fcfcfc;
		color: #333;
		font-weight: bold;
	}

	.helpers {
		display: flex;
		align-self: flex-start;
		margin-left: auto;
	}

	/* ribbon */
	.ribbon {
		display: flex;
		margin: 0 4px;
		border: 1px solid #c8cbce;
	}

	.group {
		display: flex;
		flex-direction: column;
		border-right: 1px solid #d0d3d5;
	}

	.group.rest {
		flex: 1;
		border-right: 0;
	}

	.body {
		display: flex;
		justify-content: center;
		gap: 8px;
		height: 78px;
		padding: 0 7px;
	}

	.name {
		gap: 4px;
		height: 22px;
		padding: 0 5px 2px;
		border-top: 1px solid #c8cbce;
		background-color: #eeeff1;
	}

	.big {
		flex-direction: column;
		justify-content: flex-start;
		min-width: 32px;
		padding-top: 6px;
		line-height: 12px;
	}

	.big span {
		margin-top: 11px;
	}

	.big .caret {
		margin-top: 4px;
	}

	.col {
		display: flex;
		flex-direction: column;
		padding-top: 1px;
	}

	.small {
		justify-content: flex-start;
		gap: 4px;
		height: 25px;
	}

	.small .caret {
		margin-left: 2px;
	}

	.small:disabled {
		color: #a0a2a4;
	}

	/* model tree */
	.work {
		display: flex;
		flex: 1;
		padding: 0 4px;
	}

	.side {
		display: flex;
		flex-direction: column;
		width: 216px;
		padding: 13px 0 11px;
	}

	.sidetabs {
		display: flex;
	}

	.sidetabs button {
		width: 30px;
		height: 29px;
		border: 1px solid #c8cbce;
		border-left: 0;
		border-bottom: 0;
		background-color: #eeeff1;
	}

	.sidetabs .active {
		z-index: 1;
		height: 30px;
		margin-bottom: -1px;
		border-left: 1px solid #c8cbce;
		background-color: #fcfcfc;
	}

	.panel {
		flex: 1;
		border: 1px solid #c8cbce;
		border-right: 3px solid #c5cace;
		border-bottom: 2px solid #c5cace;
	}

	.panelhead {
		display: flex;
		align-items: center;
		height: 29px;
		padding: 0 3px 0 20px;
		border-bottom: 1px solid #c8cbce;
	}

	.panelhead h2 {
		margin: 0 auto 0 0;
		font-size: 13px;
		font-weight: bold;
		line-height: 18px;
	}

	.panelhead button {
		width: 22px;
	}

	.panelhead .drop {
		width: 20px;
	}

	.panelhead .last {
		margin-left: 6px;
	}

	.tree {
		margin: 0;
		padding: 5px 0;
		list-style: none;
		color: #444;
		font-family: "Open Sans", "Noto Sans CJK SC", sans-serif;
	}

	.tree li {
		display: flex;
		align-items: center;
		gap: 5px;
		height: 24px;
		padding-left: 15px;
	}

	.tree .root {
		padding-left: 10px;
	}

	.tree .latin {
		font-size: 13px;
	}

	.arrow {
		width: 10px;
		height: 10px;
	}

	/* graphics area */
	.stage {
		display: flex;
		flex: 1;
		flex-direction: column;
		align-items: center;
		min-width: 0;
		padding-top: 7px;
	}

	.viewbar {
		display: flex;
		padding: 0 5px 0 4px;
		border: 1px solid #c8cbce;
		background-color: #eeeff1;
	}

	.viewbar button {
		position: relative;
		width: 27px;
		height: 26px;
		padding-right: 2px;
		border-left: 1px solid #c8cbce;
		background-color: #fcfcfc;
	}

	.viewbar button:last-child {
		border-right: 1px solid #c8cbce;
	}

	.viewbar .on {
		border: 1px solid #b4b7ba;
		border-top: 2px solid #999;
		background-color: #e9eaec;
	}

	.viewbar .more::after {
		content: "";
		position: absolute;
		right: 2px;
		bottom: 3px;
		border: 2px solid #444;
		border-top-color: transparent;
		border-left-color: transparent;
	}

	.scene {
		flex: 1 1 0;
		width: 100%;
		min-height: 0;
	}

	.axisname {
		fill: #777;
		font-family: Roboto, sans-serif;
		font-size: 14px;
		font-weight: 300;
	}

	.csysname {
		fill: #a0662f;
		font-family: Roboto, sans-serif;
		font-size: 16px;
		font-weight: 300;
	}

	/* status bar */
	.status {
		position: relative;
		display: flex;
		align-items: center;
		height: 35px;
		padding: 0 18px 0 6px;
		border-top: 2px solid #999;
		background-color: #eeeff1;
	}

	.toggle {
		width: 22px;
		height: 22px;
		margin-right: 4px;
		border: 1px solid #c8cbce;
		background-color: #f6f6f7;
	}

	.toggle.on {
		border-color: #b4b7ba;
		border-top: 2px solid #999;
		background-color: #e9eaec;
	}

	.cells {
		display: flex;
		align-items: center;
		margin-left: auto;
	}

	.cell {
		display: flex;
		align-items: center;
		justify-content: center;
		width: 36px;
		height: 26px;
		border-left: 1px solid #d0d2d4;
		box-shadow: inset 1px 0 0 #fff;
	}

	.cell.first {
		margin-left: 5px;
	}

	.cell.flag {
		justify-content: flex-start;
		width: 41px;
		padding-left: 2px;
	}

	.cell.search {
		width: 46px;
	}

	.lights {
		gap: 1px;
	}

	.lights i {
		width: 6px;
		height: 6px;
		border-radius: 50%;
		background-color: #c8c8c8;
	}

	.lights .go {
		width: 11px;
		height: 11px;
		background-color: #43cc43;
	}

	.find {
		width: 40px;
		height: 25px;
		border: 1px solid #b8bbbe;
		border-radius: 3px;
		background: linear-gradient(#fdfdfd, #ececee);
	}

	.filter {
		position: relative;
		margin-left: 62px;
	}

	.filter select {
		display: block;
		appearance: none;
		width: 176px;
		height: 18px;
		padding: 0 18px 0 7px;
		border: 1px solid #c0c3c6;
		border-radius: 0;
		background-color: #f8f8f8;
		color: #222;
		font: inherit;
		line-height: 16px;
	}

	.filter .caret {
		position: absolute;
		top: 7px;
		right: 4px;
	}

	.mark {
		position: absolute;
		right: 6px;
		bottom: 5px;
		color: rgba(255, 255, 255, .6);
		font-size: 16px;
		line-height: 18px;
		text-shadow: 1px 1px 1px rgba(0, 0, 0, .15);
		pointer-events: none;
	}
```
